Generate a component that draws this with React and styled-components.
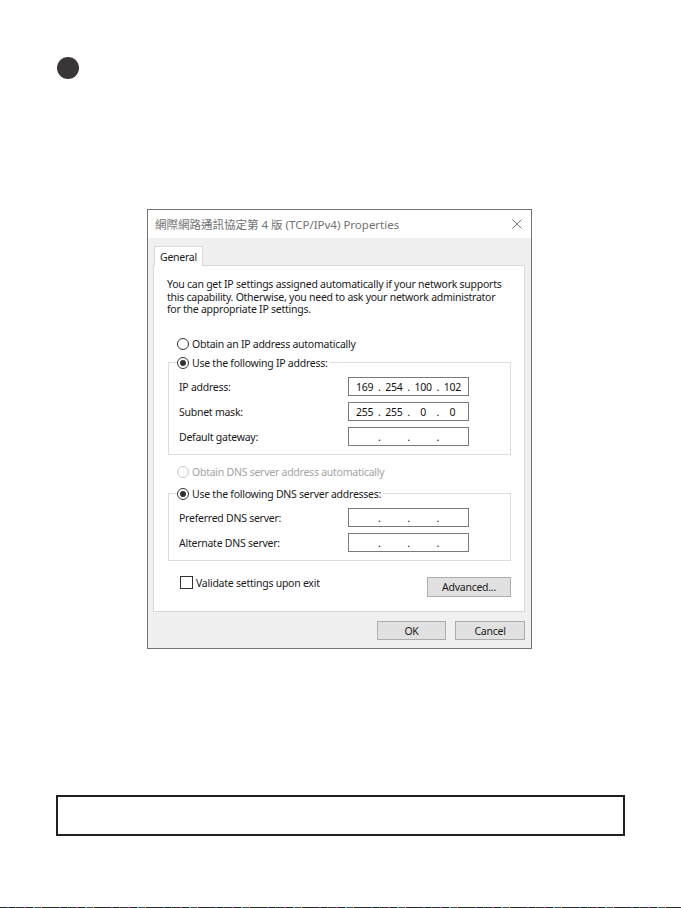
import * as React from 'react';
import styled, { createGlobalStyle } from 'styled-components';

const Global = createGlobalStyle`
  html, body { margin: 0; padding: 0; background: #fff; }
  body { font-family: "Noto Sans", "Open Sans", sans-serif; }
`;

const Page = styled.div`
  width: 681px;
  height: 908px;
  display: flex;
  flex-direction: column;
  align-items: flex-start;
  background: #fff;
  overflow: hidden;
`;

const Bullet = styled.div`
  width: 22px;
  height: 22px;
  border-radius: 50%;
  background: #3a3637;
  margin: 57px 0 0 57px;
`;

const Dialog = styled.div`
  box-sizing: border-box;
  width: 385px;
  height: 440px;
  margin: 130px 0 0 147px;
  border: 1px solid #737373;
  background: #f0f0f0;
  display: flex;
  flex-direction: column;
  font-size: 10.5px;
  letter-spacing: -0.25px;
  color: #1a1a1a;
`;

const TitleBar = styled.div`
  height: 28px;
  background: #fff;
  display: flex;
  align-items: center;
  justify-content: space-between;
  padding: 0 9px 0 7px;
  font-size: 11.5px;
  letter-spacing: 0;
  color: #717171;
  font-family: "Noto Sans", "Noto Sans CJK TC", sans-serif;
`;

const Body = styled.div`
  flex: 1;
  display: flex;
  flex-direction: column;
  padding: 8px 6px 7px 5px;
`;

const Tabs = styled.div`
  display: flex;
  padding-left: 1px;
`;

const Tab = styled.div`
  height: 19px;
  padding: 0 5px;
  display: flex;
  align-items: center;
  background: #fff;
  border: 1px solid #d9d9d9;
  border-bottom: none;
  margin-bottom: -1px;
  position: relative;
  z-index: 1;
`;

const Panel = styled.div`
  height: 347px;
  box-sizing: border-box;
  background: #fff;
  border: 1px solid #d9d9d9;
  padding: 12px 13px 0 13px;
  display: flex;
  flex-direction: column;
`;

const Intro = styled.p`
  margin: 0;
  line-height: 12.7px;
`;

const RadioRow = styled.label`
  display: flex;
  align-items: center;
  gap: 3px;
  height: 13px;
  margin-left: 10px;
  color: ${p => (p.$disabled ? '#a3a3a3' : 'inherit')};
  margin-top: ${p => p.$top || 0}px;
`;

const Radio = styled.span`
  box-sizing: border-box;
  flex: none;
  width: 12px;
  height: 12px;
  border-radius: 50%;
  border: 1px solid ${p => (p.$disabled ? '#c6c6c6' : '#333')};
  background: #fff;
  display: flex;
  align-items: center;
  justify-content: center;
  &::after {
    content: '';
    width: 6px;
    height: 6px;
    border-radius: 50%;
    background: ${p => (p.$checked ? '#333' : 'transparent')};
  }
`;

const Group = styled.fieldset`
  margin: ${p => p.$top || 0}px 0 0 1px;
  padding: 8px 0 8px 10px;
  border: 1px solid #dcdcdc;
  display: flex;
  flex-direction: column;
  gap: 6px;
  min-width: 0;
`;

const Legend = styled.legend`
  padding: 0 2px 0 0;
  margin-left: -2px;
  display: flex;
  align-items: center;
  gap: 3px;
  height: 13px;
`;

const FieldRow = styled.div`
  display: flex;
  align-items: center;
  justify-content: space-between;
  padding-right: 41px;
  height: 19px;
`;

const IpBox = styled.div`
  box-sizing: border-box;
  width: 121px;
  height: 19px;
  border: 1px solid #7a7a7a;
  background: #fff;
  display: flex;
  align-items: center;
  padding: 0 3px;
  color: #111;
`;

const Octet = styled.span`
  flex: 1;
  text-align: center;
`;

const Dot = styled.span`
  width: 4px;
  text-align: center;
`;

const Footer = styled.div`
  display: flex;
  align-items: flex-start;
  justify-content: space-between;
  margin: 15px 0 0 13px;
`;

const Check = styled.label`
  display: flex;
  align-items: center;
  gap: 3px;
  height: 13px;
`;

const Box = styled.span`
  box-sizing: border-box;
  width: 13px;
  height: 13px;
  border: 1px solid #333;
  background: #fff;
`;

const Button = styled.button`
  box-sizing: border-box;
  width: ${p => p.$w}px;
  height: ${p => p.$h || 19}px;
  margin-top: ${p => p.$top || 0}px;
  background: #e1e1e1;
  border: 1px solid #adadad;
  font: inherit;
  letter-spacing: inherit;
  color: #1a1a1a;
  padding: 0;
`;

const Actions = styled.div`
  display: flex;
  justify-content: flex-end;
  gap: 9px;
  margin-top: 9px;
`;

const NoteBox = styled.div`
  box-sizing: border-box;
  width: 569px;
  height: 41px;
  margin: 146px 0 0 56px;
  border: 2px solid #231f20;
`;

const Scanline = styled.div`
  margin-top: auto;
  width: 100%;
  height: 1px;
  background: repeating-linear-gradient(90deg,
    #2a2a2a 0 7px, #3b6bd6 7px 9px, #1d1d1d 9px 15px, #39b54a 15px 16px,
    #333 16px 24px, #d23c8c 24px 26px, #222 26px 33px, #2fc6d8 33px 35px,
    #444 35px 41px, #f0c020 41px 42px, #262626 42px 52px);
`;

function IpField({ value }) {
  const parts = value ? value.split('.') : ['', '', '', ''];
  return (
    <IpBox>
      <Octet>{parts[0]}</Octet><Dot>.</Dot>
      <Octet>{parts[1]}</Octet><Dot>.</Dot>
      <Octet>{parts[2]}</Octet><Dot>.</Dot>
      <Octet>{parts[3]}</Octet>
    </IpBox>
  );
}

function Close() {
  return (
    <svg width="10" height="10" viewBox="0 0 10 10">
      <path d="M0.5 0.5 L9.5 9.5 M9.5 0.5 L0.5 9.5" stroke="#777" strokeWidth="1" fill="none" />
    </svg>
  );
}

export default function App() {
  return (
    <Page>
      <Global />
      <Bullet />
      <Dialog>
        <TitleBar>
          <span>網際網路通訊協定第 4 版 (TCP/IPv4) Properties</span>
          <Close />
        </TitleBar>
        <Body>
          <Tabs><Tab>General</Tab></Tabs>
          <Panel>
            <Intro>
              You can get IP settings assigned automatically if your network supports
              this capability. Otherwise, you need to ask your network administrator
              for the appropriate IP settings.
            </Intro>
            <RadioRow $top={21}><Radio />Obtain an IP address automatically</RadioRow>
            <Group $top={6}>
              <Legend><Radio $checked />Use the following IP address:</Legend>
              <FieldRow>IP address:<IpField value="169.254.100.102" /></FieldRow>
              <FieldRow>Subnet mask:<IpField value="255.255.0.0" /></FieldRow>
              <FieldRow>Default gateway:<IpField /></FieldRow>
            </Group>
            <RadioRow $top={10} $disabled><Radio $disabled />Obtain DNS server address automatically</RadioRow>
            <Group $top={9}>
              <Legend><Radio $checked />Use the following DNS server addresses:</Legend>
              <FieldRow>Preferred DNS server:<IpField /></FieldRow>
              <FieldRow>Alternate DNS server:<IpField /></FieldRow>
            </Group>
            <Footer>
              <Check><Box />Validate settings upon exit</Check>
              <Button $w={84} $h={20} $top={1}>Advanced...</Button>
            </Footer>
          </Panel>
          <Actions>
            <Button $w={69}>OK</Button>
            <Button $w={70}>Cancel</Button>
          </Actions>
        </Body>
      </Dialog>
      <NoteBox />
      <Scanline />
    </Page>
  );
}
